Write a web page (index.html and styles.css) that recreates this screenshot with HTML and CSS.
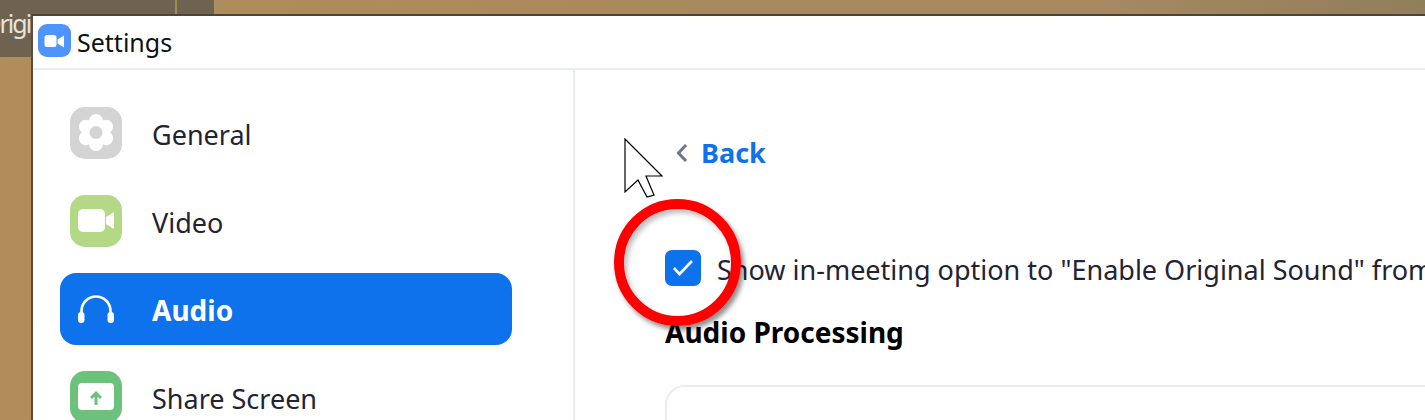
FILE: index.html
```html
<!DOCTYPE html>
<html lang="en">

<head>
    <meta charset="UTF-8">
    <title>Settings</title>
    <link rel="stylesheet" href="styles.css">
</head>

<body>
    <!-- desktop behind the window -->
    <div class="desktop">
        <div class="bg-panel">
            <span class="bg-text">Origi</span>
            <span class="bg-seam"></span>
        </div>
    </div>

    <div class="window">
        <div class="title-bar">
            <svg class="app-logo" width="33" height="33" viewBox="0 0 33 33">
                <rect width="33" height="33" rx="9" fill="#4f93ff" />
                <rect x="6.500" y="11" width="12" height="12" rx="2.500" fill="#fff" />
                <path d="M19.500 15.500l6.500-4v12l-6.500-4z" fill="#fff" />
            </svg>
            <span class="title">Settings</span>
        </div>

        <div class="content">
            <div class="sidebar">
                <div class="nav-item">
                    <span class="nav-icon icon-gray">
                        <svg width="52" height="52" viewBox="0 0 52 52">
                            <g fill="#fff">
                                <circle cx="26" cy="25.500" r="13.500" />
                                <circle cx="26" cy="14" r="7" />
                                <circle cx="26" cy="37" r="7" />
                                <circle cx="16" cy="19.700" r="7" />
                                <circle cx="36" cy="19.700" r="7" />
                                <circle cx="16" cy="31.300" r="7" />
                                <circle cx="36" cy="31.300" r="7" />
                            </g>
                            <circle cx="26" cy="25.500" r="6.500" fill="#d4d4d4" />
                        </svg>
                    </span>
                    <span class="nav-label">General</span>
                </div>
                <div class="nav-item">
                    <span class="nav-icon icon-lime">
                        <svg width="52" height="52" viewBox="0 0 52 52">
                            <rect x="8" y="14" width="27" height="23" rx="5" fill="#fff" />
                            <path d="M36 22l8-5v17l-8-5z" fill="#fff" />
                        </svg>
                    </span>
                    <span class="nav-label">Video</span>
                </div>
                <div class="nav-item active">
                    <span class="nav-icon">
                        <svg width="52" height="52" viewBox="0 0 52 52">
                            <path d="M11.500 33v-5a14.500 14.500 0 0 1 29 0v5" fill="none" stroke="#fff" stroke-width="2.600" />
                            <rect x="8" y="29" width="6.500" height="11" rx="3.200" fill="#fff" />
                            <rect x="37.500" y="29" width="6.500" height="11" rx="3.200" fill="#fff" />
                        </svg>
                    </span>
                    <span class="nav-label">Audio</span>
                </div>
                <div class="nav-item">
                    <span class="nav-icon icon-green">
                        <svg width="52" height="52" viewBox="0 0 52 52">
                            <rect x="8" y="12" width="36" height="27" rx="4" fill="#fff" />
                            <path d="M26 34V22.500M21 27l5-5 5 5" fill="none" stroke="#6cc27c" stroke-width="3" />
                        </svg>
                    </span>
                    <span class="nav-label">Share Screen</span>
                </div>
            </div>

            <div class="main">
                <div class="back-link">
                    <svg width="14" height="20" viewBox="0 0 14 20">
                        <path d="M11 2L3.500 10l7.500 8" fill="none" stroke="#6e7591" stroke-width="3" />
                    </svg>
                    <span>Back</span>
                </div>
                <div class="option">
                    <span class="checkbox">
                        <svg width="36" height="36" viewBox="0 0 36 36">
                            <path d="M9 18l5.500 6L27 11" fill="none" stroke="#fff" stroke-width="2.600" />
                        </svg>
                    </span>
                    <span class="option-label">Show in-meeting option to "Enable Original Sound" from microphone</span>
                </div>
                <h2 class="section-title">Audio Processing</h2>
                <div class="section-box"></div>
            </div>
        </div>
    </div>

    <!-- annotations drawn on top of the screenshot -->
    <svg class="cursor" width="40" height="62" viewBox="0 0 40 62">
        <path d="M1 1L38 38H22l8 19-7 2-9-17L1 54z" fill="#fff" stroke="#000" stroke-width="1.200" />
    </svg>
    <div class="red-ring"></div>
</body>

</html>
```

FILE: styles.css
```css
* {
    box-sizing: border-box;
    margin: 0;
    padding: 0;
}

html,
body {
    height: 420px;
    overflow: hidden;
}

body {
    font-family: "Noto Sans", "Open Sans", sans-serif;
    color: #232333;
    position: relative;
    background-color: #a3875c;
}

.desktop {
    position: absolute;
    top: 0;
    left: 0;
    right: 0;
    bottom: 0;
    background: linear-gradient(90deg, #b08d5a 0, #a98a5e 50%, #a88a60 75%, #917e5b 100%);
}

.bg-panel {
    width: 214px;
    height: 57px;
    background-color: #6e6350;
    position: relative;
    overflow: hidden;
}

.bg-text {
    position: absolute;
    top: 6px;
    left: -18px;
    font-size: 25px;
    letter-spacing: -2px;
    color: #e8e4dc;
    white-space: nowrap;
}

.bg-seam {
    position: absolute;
    top: 0;
    left: 175px;
    width: 2px;
    height: 57px;
    background-color: #a58a55;
}

.window {
    position: absolute;
    top: 14px;
    left: 31px;
    width: 1500px;
    height: 500px;
    background-color: #fff;
    border-top: 2px solid #4f4434;
    border-left: 2px solid #5a4e3a;
}

.title-bar {
    height: 54px;
    display: flex;
    align-items: center;
    border-bottom: 2px solid #e9ebf5;
}

.app-logo {
    margin-left: 5px;
    margin-bottom: 3px;
}

.title {
    margin-left: 6px;
    font-size: 25px;
    color: #111;
}

.content {
    display: flex;
}

.sidebar {
    width: 542px;
    flex-shrink: 0;
    padding: 27px 0 0 27px;
    border-right: 2px solid #e9ebf5;
    height: 450px;
}

.nav-item {
    width: 452px;
    height: 72px;
    margin-bottom: 16px;
    padding-left: 10px;
    display: flex;
    align-items: center;
    gap: 30px;
    border-radius: 16px;
    font-size: 27px;
}

.nav-label {
    padding-top: 2px;
}

.nav-item.active {
    background-color: #0e72ed;
    color: #fff;
    font-weight: 700;
    font-size: 28px;
}

.nav-icon {
    width: 52px;
    height: 52px;
    border-radius: 15px;
    flex-shrink: 0;
}

.nav-icon svg {
    display: block;
}

.icon-gray {
    background-color: #d4d4d4;
}

.icon-lime {
    background-color: #b3d987;
}

.icon-green {
    background-color: #6cc27c;
}

.main {
    padding: 64px 0 0 90px;
}

.back-link {
    display: flex;
    align-items: center;
    gap: 12px;
    margin-left: 10px;
    color: #0e72ed;
    font-size: 27px;
    font-weight: 700;
}

.option {
    display: flex;
    align-items: flex-start;
    gap: 16px;
    margin-top: 79px;
    white-space: nowrap;
}

.checkbox {
    width: 36px;
    height: 36px;
    background-color: #0e72ed;
    border-radius: 7px;
    flex-shrink: 0;
}

.checkbox svg {
    display: block;
}

.option-label {
    font-size: 27px;
    line-height: 40px;
}

.section-title {
    margin-top: 23px;
    font-size: 28px;
    font-weight: 700;
    color: #000;
}

.section-box {
    margin-top: 34px;
    width: 900px;
    height: 120px;
    border: 2px solid #e9edf3;
    border-radius: 20px;
}

/* annotations */
.cursor {
    position: absolute;
    top: 138px;
    left: 624px;
}

.red-ring {
    position: absolute;
    top: 199px;
    left: 614px;
    width: 127px;
    height: 127px;
    border: 10px solid #fe0000;
    border-radius: 50%;
    box-shadow: 3px 4px 5px rgba(0, 0, 0, 0.45), inset 3px 4px 5px rgba(0, 0, 0, 0.25);
}
```
